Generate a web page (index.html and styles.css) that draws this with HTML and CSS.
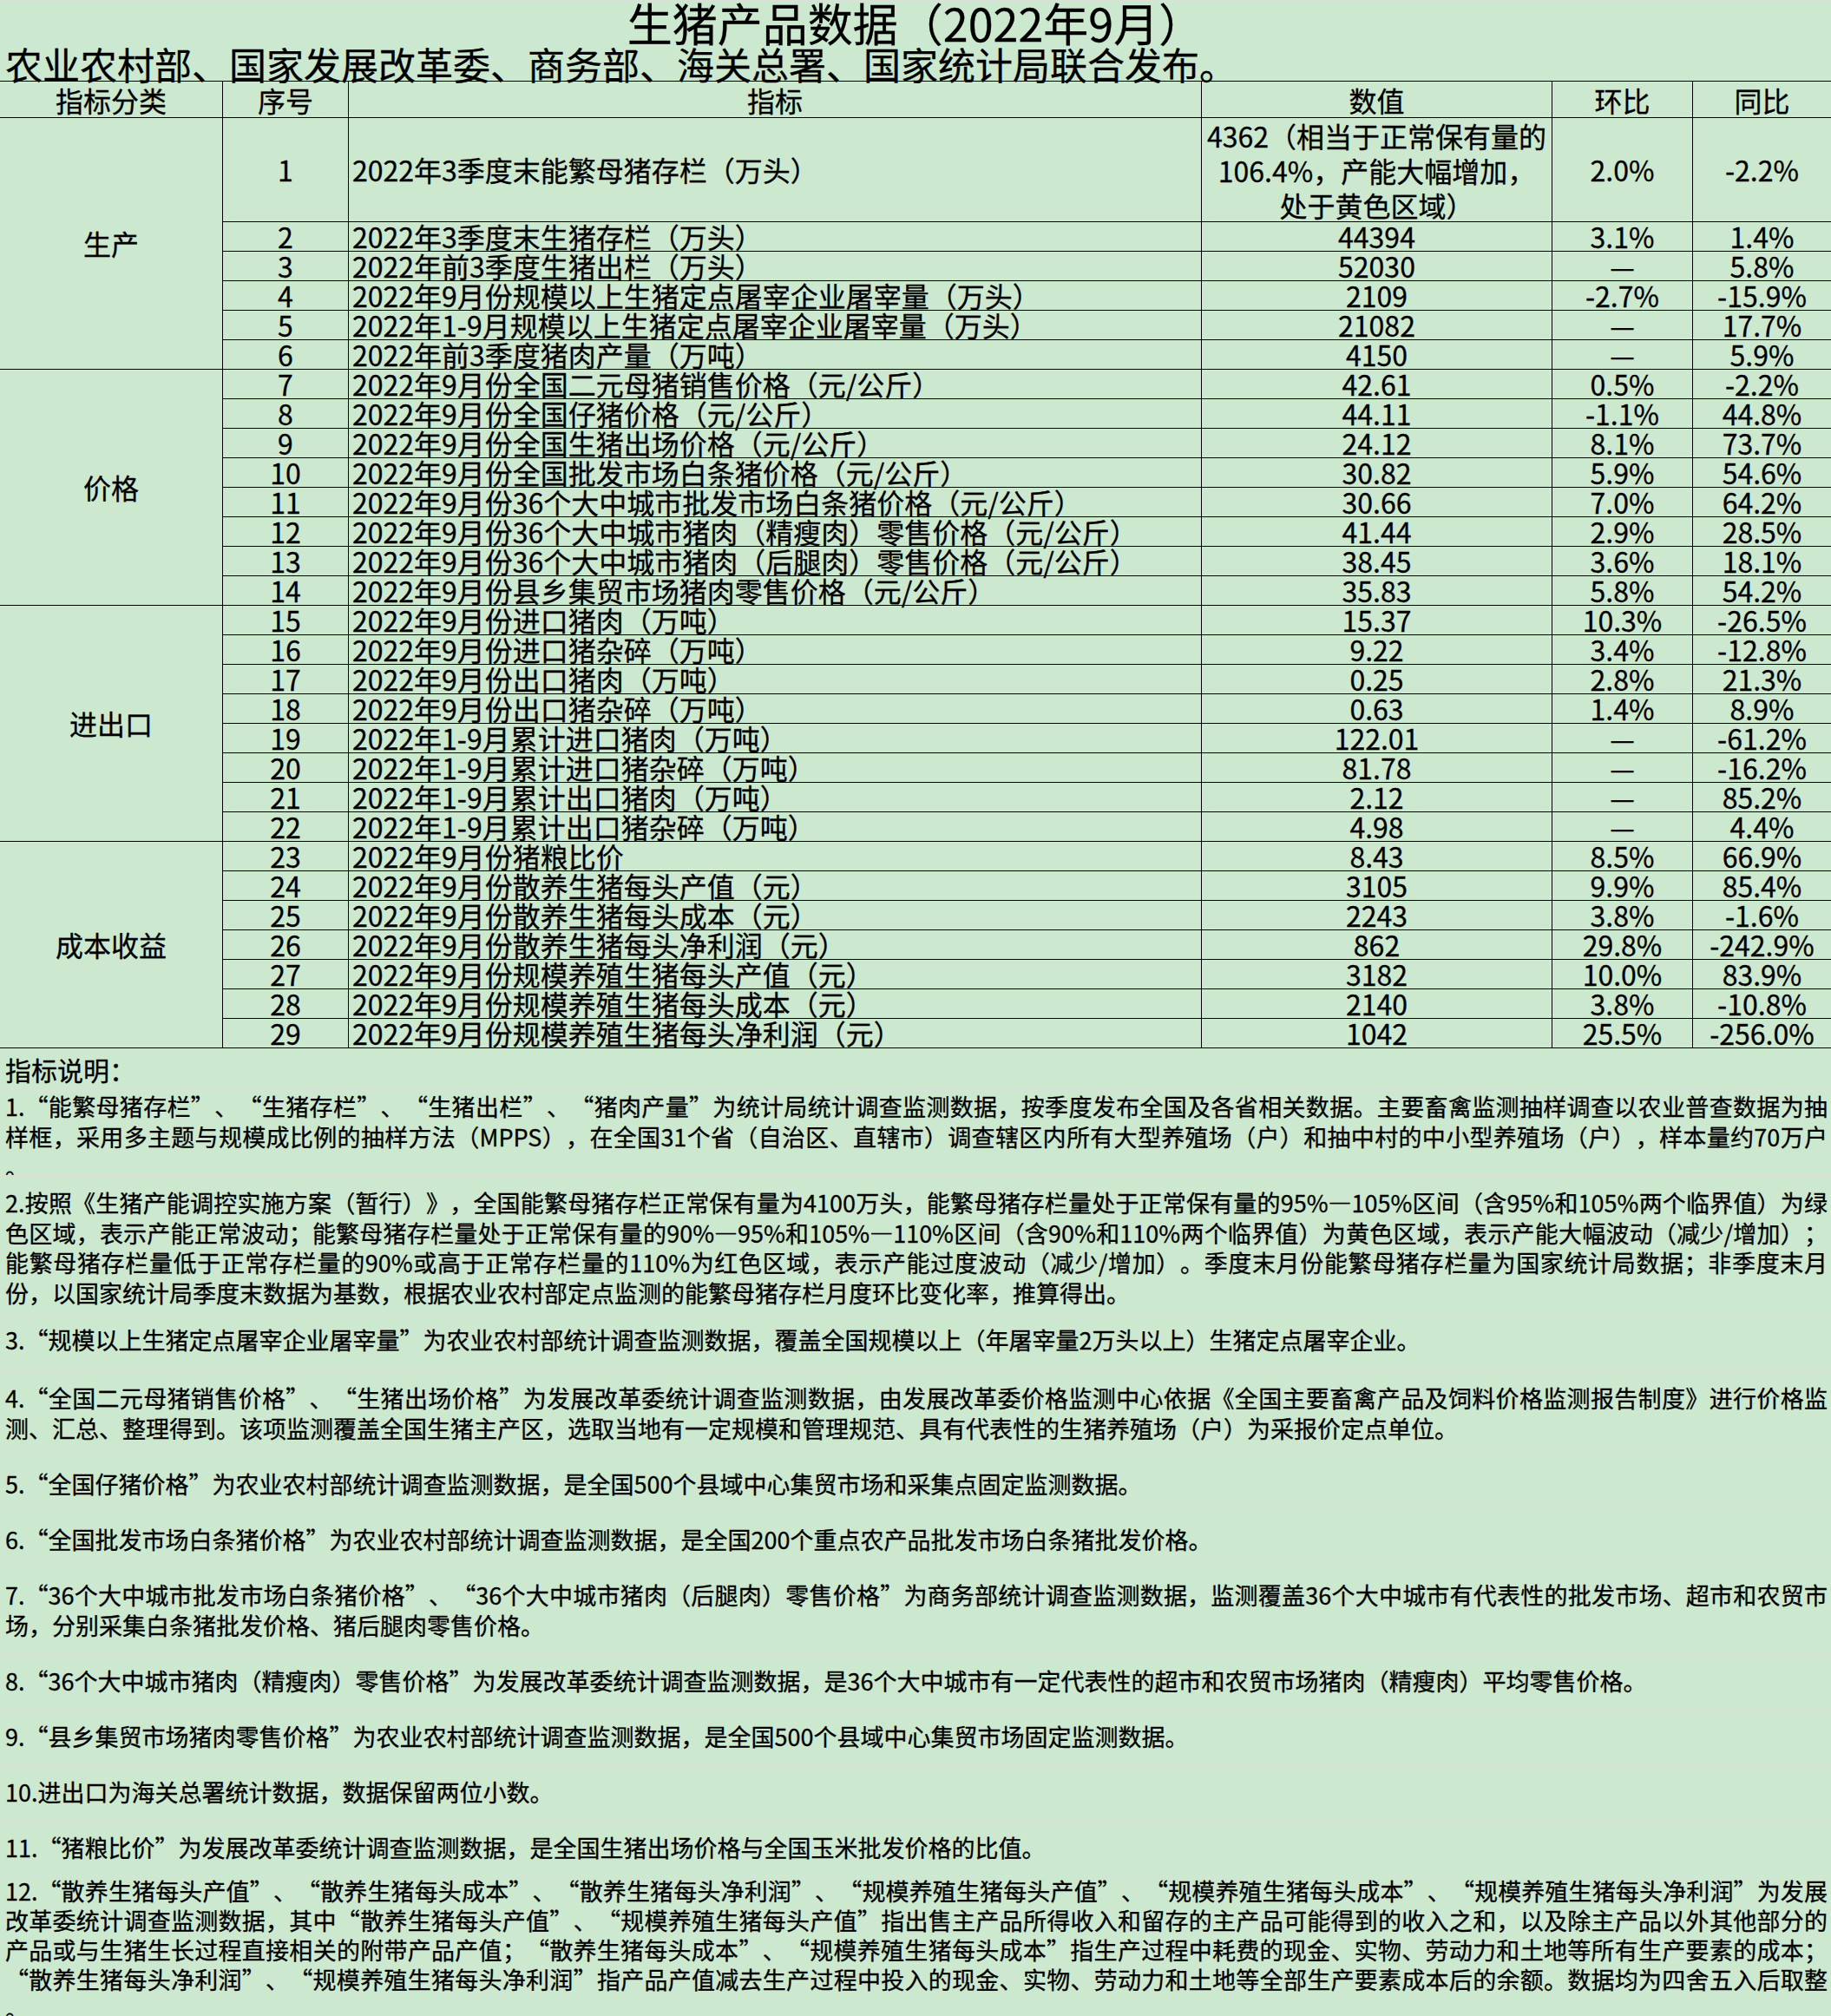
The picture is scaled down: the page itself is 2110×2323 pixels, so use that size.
FILE: index.html
```html
<!DOCTYPE html>
<html lang="zh-CN">
<head>
<meta charset="utf-8">
<title>生猪产品数据（2022年9月）</title>
<link rel="stylesheet" href="styles.css">
</head>
<body>
<div class="page">
  <div class="title">生猪产品数据（2022年9月）</div>
  <div class="subtitle">农业农村部、国家发展改革委、商务部、海关总署、国家统计局联合发布。</div>

  <div class="grid">
    <div class="cell hd">指标分类</div>
    <div class="cell hd">序号</div>
    <div class="cell hd">指标</div>
    <div class="cell hd">数值</div>
    <div class="cell hd">环比</div>
    <div class="cell hd yoy">同比</div>

    <div class="cell cat s6">生产</div>
    <div class="cell">1</div><div class="cell name">2022年3季度末能繁母猪存栏（万头）</div><div class="cell multi">4362（相当于正常保有量的<br>106.4%，产能大幅增加，<br>处于黄色区域）</div><div class="cell">2.0%</div><div class="cell yoy">-2.2%</div>
    <div class="cell">2</div><div class="cell name">2022年3季度末生猪存栏（万头）</div><div class="cell">44394</div><div class="cell">3.1%</div><div class="cell yoy">1.4%</div>
    <div class="cell">3</div><div class="cell name">2022年前3季度生猪出栏（万头）</div><div class="cell">52030</div><div class="cell">—</div><div class="cell yoy">5.8%</div>
    <div class="cell">4</div><div class="cell name">2022年9月份规模以上生猪定点屠宰企业屠宰量（万头）</div><div class="cell">2109</div><div class="cell">-2.7%</div><div class="cell yoy">-15.9%</div>
    <div class="cell">5</div><div class="cell name">2022年1-9月规模以上生猪定点屠宰企业屠宰量（万头）</div><div class="cell">21082</div><div class="cell">—</div><div class="cell yoy">17.7%</div>
    <div class="cell">6</div><div class="cell name">2022年前3季度猪肉产量（万吨）</div><div class="cell">4150</div><div class="cell">—</div><div class="cell yoy">5.9%</div>

    <div class="cell cat s8">价格</div>
    <div class="cell">7</div><div class="cell name">2022年9月份全国二元母猪销售价格（元/公斤）</div><div class="cell">42.61</div><div class="cell">0.5%</div><div class="cell yoy">-2.2%</div>
    <div class="cell">8</div><div class="cell name">2022年9月份全国仔猪价格（元/公斤）</div><div class="cell">44.11</div><div class="cell">-1.1%</div><div class="cell yoy">44.8%</div>
    <div class="cell">9</div><div class="cell name">2022年9月份全国生猪出场价格（元/公斤）</div><div class="cell">24.12</div><div class="cell">8.1%</div><div class="cell yoy">73.7%</div>
    <div class="cell">10</div><div class="cell name">2022年9月份全国批发市场白条猪价格（元/公斤）</div><div class="cell">30.82</div><div class="cell">5.9%</div><div class="cell yoy">54.6%</div>
    <div class="cell">11</div><div class="cell name">2022年9月份36个大中城市批发市场白条猪价格（元/公斤）</div><div class="cell">30.66</div><div class="cell">7.0%</div><div class="cell yoy">64.2%</div>
    <div class="cell">12</div><div class="cell name">2022年9月份36个大中城市猪肉（精瘦肉）零售价格（元/公斤）</div><div class="cell">41.44</div><div class="cell">2.9%</div><div class="cell yoy">28.5%</div>
    <div class="cell">13</div><div class="cell name">2022年9月份36个大中城市猪肉（后腿肉）零售价格（元/公斤）</div><div class="cell">38.45</div><div class="cell">3.6%</div><div class="cell yoy">18.1%</div>
    <div class="cell">14</div><div class="cell name">2022年9月份县乡集贸市场猪肉零售价格（元/公斤）</div><div class="cell">35.83</div><div class="cell">5.8%</div><div class="cell yoy">54.2%</div>

    <div class="cell cat s8">进出口</div>
    <div class="cell">15</div><div class="cell name">2022年9月份进口猪肉（万吨）</div><div class="cell">15.37</div><div class="cell">10.3%</div><div class="cell yoy">-26.5%</div>
    <div class="cell">16</div><div class="cell name">2022年9月份进口猪杂碎（万吨）</div><div class="cell">9.22</div><div class="cell">3.4%</div><div class="cell yoy">-12.8%</div>
    <div class="cell">17</div><div class="cell name">2022年9月份出口猪肉（万吨）</div><div class="cell">0.25</div><div class="cell">2.8%</div><div class="cell yoy">21.3%</div>
    <div class="cell">18</div><div class="cell name">2022年9月份出口猪杂碎（万吨）</div><div class="cell">0.63</div><div class="cell">1.4%</div><div class="cell yoy">8.9%</div>
    <div class="cell">19</div><div class="cell name">2022年1-9月累计进口猪肉（万吨）</div><div class="cell">122.01</div><div class="cell">—</div><div class="cell yoy">-61.2%</div>
    <div class="cell">20</div><div class="cell name">2022年1-9月累计进口猪杂碎（万吨）</div><div class="cell">81.78</div><div class="cell">—</div><div class="cell yoy">-16.2%</div>
    <div class="cell">21</div><div class="cell name">2022年1-9月累计出口猪肉（万吨）</div><div class="cell">2.12</div><div class="cell">—</div><div class="cell yoy">85.2%</div>
    <div class="cell">22</div><div class="cell name">2022年1-9月累计出口猪杂碎（万吨）</div><div class="cell">4.98</div><div class="cell">—</div><div class="cell yoy">4.4%</div>

    <div class="cell cat s7">成本收益</div>
    <div class="cell">23</div><div class="cell name">2022年9月份猪粮比价</div><div class="cell">8.43</div><div class="cell">8.5%</div><div class="cell yoy">66.9%</div>
    <div class="cell">24</div><div class="cell name">2022年9月份散养生猪每头产值（元）</div><div class="cell">3105</div><div class="cell">9.9%</div><div class="cell yoy">85.4%</div>
    <div class="cell">25</div><div class="cell name">2022年9月份散养生猪每头成本（元）</div><div class="cell">2243</div><div class="cell">3.8%</div><div class="cell yoy">-1.6%</div>
    <div class="cell">26</div><div class="cell name">2022年9月份散养生猪每头净利润（元）</div><div class="cell">862</div><div class="cell">29.8%</div><div class="cell yoy">-242.9%</div>
    <div class="cell">27</div><div class="cell name">2022年9月份规模养殖生猪每头产值（元）</div><div class="cell">3182</div><div class="cell">10.0%</div><div class="cell yoy">83.9%</div>
    <div class="cell">28</div><div class="cell name">2022年9月份规模养殖生猪每头成本（元）</div><div class="cell">2140</div><div class="cell">3.8%</div><div class="cell yoy">-10.8%</div>
    <div class="cell">29</div><div class="cell name">2022年9月份规模养殖生猪每头净利润（元）</div><div class="cell">1042</div><div class="cell">25.5%</div><div class="cell yoy">-256.0%</div>
  </div>

  <div class="notes">
    <div class="intro">指标说明：</div>

    <div class="note n1">
      <div class="ln j">1.“能繁母猪存栏”、“生猪存栏”、“生猪出栏”、“猪肉产量”为统计局统计调查监测数据，按季度发布全国及各省相关数据。主要畜禽监测抽样调查以农业普查数据为抽</div>
      <div class="ln j">样框，采用多主题与规模成比例的抽样方法（MPPS），在全国31个省（自治区、直辖市）调查辖区内所有大型养殖场（户）和抽中村的中小型养殖场（户），样本量约70万户</div>
      <div class="ln">。</div>
    </div>

    <div class="note n2">
      <div class="ln j">2.按照《生猪产能调控实施方案（暂行）》，全国能繁母猪存栏正常保有量为4100万头，能繁母猪存栏量处于正常保有量的95%—105%区间（含95%和105%两个临界值）为绿</div>
      <div class="ln j">色区域，表示产能正常波动；能繁母猪存栏量处于正常保有量的90%—95%和105%—110%区间（含90%和110%两个临界值）为黄色区域，表示产能大幅波动（减少/增加）；</div>
      <div class="ln j">能繁母猪存栏量低于正常存栏量的90%或高于正常存栏量的110%为红色区域，表示产能过度波动（减少/增加）。季度末月份能繁母猪存栏量为国家统计局数据；非季度末月</div>
      <div class="ln">份，以国家统计局季度末数据为基数，根据农业农村部定点监测的能繁母猪存栏月度环比变化率，推算得出。</div>
    </div>

    <div class="note n3">
      <div class="ln">3.“规模以上生猪定点屠宰企业屠宰量”为农业农村部统计调查监测数据，覆盖全国规模以上（年屠宰量2万头以上）生猪定点屠宰企业。</div>
    </div>

    <div class="note two">
      <div class="ln j">4.“全国二元母猪销售价格”、“生猪出场价格”为发展改革委统计调查监测数据，由发展改革委价格监测中心依据《全国主要畜禽产品及饲料价格监测报告制度》进行价格监</div>
      <div class="ln">测、汇总、整理得到。该项监测覆盖全国生猪主产区，选取当地有一定规模和管理规范、具有代表性的生猪养殖场（户）为采报价定点单位。</div>
    </div>

    <div class="note one">
      <div class="ln">5.“全国仔猪价格”为农业农村部统计调查监测数据，是全国500个县域中心集贸市场和采集点固定监测数据。</div>
    </div>

    <div class="note one">
      <div class="ln">6.“全国批发市场白条猪价格”为农业农村部统计调查监测数据，是全国200个重点农产品批发市场白条猪批发价格。</div>
    </div>

    <div class="note two">
      <div class="ln j">7.“36个大中城市批发市场白条猪价格”、“36个大中城市猪肉（后腿肉）零售价格”为商务部统计调查监测数据，监测覆盖36个大中城市有代表性的批发市场、超市和农贸市</div>
      <div class="ln">场，分别采集白条猪批发价格、猪后腿肉零售价格。</div>
    </div>

    <div class="note one">
      <div class="ln">8.“36个大中城市猪肉（精瘦肉）零售价格”为发展改革委统计调查监测数据，是36个大中城市有一定代表性的超市和农贸市场猪肉（精瘦肉）平均零售价格。</div>
    </div>

    <div class="note one">
      <div class="ln">9.“县乡集贸市场猪肉零售价格”为农业农村部统计调查监测数据，是全国500个县域中心集贸市场固定监测数据。</div>
    </div>

    <div class="note one">
      <div class="ln">10.进出口为海关总署统计数据，数据保留两位小数。</div>
    </div>

    <div class="note n11">
      <div class="ln">11.“猪粮比价”为发展改革委统计调查监测数据，是全国生猪出场价格与全国玉米批发价格的比值。</div>
    </div>

    <div class="note n12">
      <div class="ln j">12.“散养生猪每头产值”、“散养生猪每头成本”、“散养生猪每头净利润”、“规模养殖生猪每头产值”、“规模养殖生猪每头成本”、“规模养殖生猪每头净利润”为发展</div>
      <div class="ln j">改革委统计调查监测数据，其中“散养生猪每头产值”、“规模养殖生猪每头产值”指出售主产品所得收入和留存的主产品可能得到的收入之和，以及除主产品以外其他部分的</div>
      <div class="ln j">产品或与生猪生长过程直接相关的附带产品产值；“散养生猪每头成本”、“规模养殖生猪每头成本”指生产过程中耗费的现金、实物、劳动力和土地等所有生产要素的成本；</div>
      <div class="ln j">“散养生猪每头净利润”、“规模养殖生猪每头净利润”指产品产值减去生产过程中投入的现金、实物、劳动力和土地等全部生产要素成本后的余额。数据均为四舍五入后取整</div>
      <div class="ln">。</div>
    </div>
  </div>
</div>
</body>
</html>
```

FILE: styles.css
```css
html {
  background: #cce8cf;
}

body {
  margin: 0;
  width: 2110px;
  font-family: "Noto Sans CJK SC", "Liberation Sans", sans-serif;
  color: #000;
  text-spacing-trim: space-all;
  -webkit-text-stroke: 0.3px #000;
}

.page {
  width: 2110px;
  height: 2323px;
  overflow: hidden;
  background: #cce8cf;
}

.title {
  box-sizing: border-box;
  height: 54px;
  border-top: 1px solid #dcdfdc;
  border-bottom: 1px solid #dcdfdc;
  font-size: 52px;
  line-height: 50px;
  text-align: center;
  white-space: nowrap;
}

.subtitle {
  height: 39px;
  padding-left: 6px;
  font-size: 43px;
  line-height: 39px;
  white-space: nowrap;
}

/* main data grid */
.grid {
  display: grid;
  grid-template-columns: 257px 145px 983px 404px 162px 159px;
  grid-template-rows: 42px 120px repeat(28, 34px);
  border-top: 1px solid #000;
}

.cell {
  box-sizing: border-box;
  border-right: 1px solid #000;
  border-bottom: 1px solid #000;
  display: flex;
  align-items: center;
  justify-content: center;
  font-size: 32px;
  line-height: 33px;
  white-space: nowrap;
}

.cell.yoy {
  border-right: none;
}

.hd {
  padding-top: 1px;
}

.name {
  justify-content: flex-start;
  padding-left: 4px;
}

.multi {
  line-height: 40px;
  text-align: center;
}

.cat.s6 { grid-row: span 6; }
.cat.s7 { grid-row: span 7; }
.cat.s8 { grid-row: span 8; }

/* notes */
.notes {
  font-size: 27px;
}

.intro {
  height: 48px;
  border-bottom: 1px solid #dcdfdc;
  padding-left: 6px;
  font-size: 30px;
  line-height: 48px;
}

.note {
  box-sizing: border-box;
  padding: 12px 4px 0 6px;
  border-bottom: 1px solid #dcdfdc;
  line-height: 35px;
}

.ln {
  text-align: left;
}

.ln.j {
  text-align: justify;
  text-align-last: justify;
}

.n1 {
  height: 98px;
  padding-top: 0;
  overflow: hidden;
}

.n2 {
  height: 159px;
  padding-top: 14px;
  line-height: 34.5px;
}

.n3 { height: 67px; }
.note.one { height: 64px; }
.note.two { height: 99px; }
.n11 { height: 63px; }

.n12 {
  height: 162px;
  padding-top: 0;
  border-bottom: none;
  line-height: 34px;
}
```
